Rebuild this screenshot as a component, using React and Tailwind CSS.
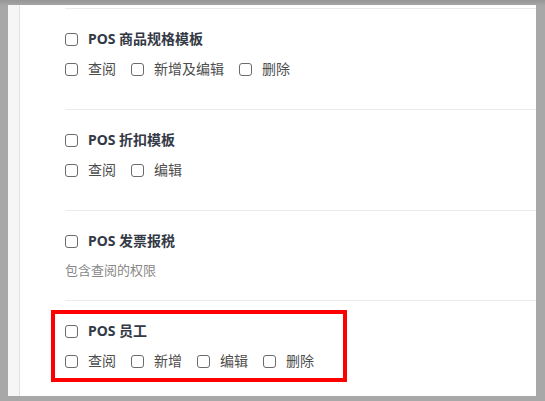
const sections = [
    { title: 'POS 商品规格模板', perms: ['查阅', '新增及编辑', '删除'], h: 'h-[101px]' },
    { title: 'POS 折扣模板', perms: ['查阅', '编辑'], h: 'h-[101px]' },
    { title: 'POS 发票报税', desc: '包含查阅的权限', h: 'h-[90px]' },
    { title: 'POS 员工', perms: ['查阅', '新增', '编辑', '删除'], h: 'h-[96px]' },
]

function Box() {
    return <span className="w-[13px] h-[13px] border border-[#6b6b6b] rounded-[3px] bg-white shrink-0" />
}

export default function App() {
    return (
        <div
            className="relative w-[545px] h-[401px] bg-[#a8a8a8] pt-[5px] pl-[8px] overflow-hidden"
            style={{ fontFamily: '"Noto Sans", "Noto Sans CJK SC", sans-serif' }}
        >
            <div className="absolute top-0 left-0 right-0 h-[6px] bg-gradient-to-b from-[#969696] to-[#a8a8a8]" />
            <div className="relative flex w-[528px] h-[391px] bg-white">
                <div className="w-[12px] bg-[#f6f6f6] border-r border-[#e2e2e2]" />
                <div className="flex-1 pl-[45px] pt-[3px]">
                    {sections.map((s) => (
                        <div key={s.title} className={`${s.h} border-t border-[#ebebeb] pt-[20px]`}>
                            <div className="flex items-center gap-[10px] h-5">
                                <Box />
                                <span className="text-[14px] font-bold text-[#333a46] leading-5">{s.title}</span>
                            </div>
                            {s.perms && (
                                <div className="flex items-center gap-[15px] h-5 mt-[10px]">
                                    {s.perms.map((p) => (
                                        <div key={p} className="flex items-center gap-[10px]">
                                            <Box />
                                            <span className="text-[14px] text-[#4d4d4d] leading-5">{p}</span>
                                        </div>
                                    ))}
                                </div>
                            )}
                            {s.desc && (
                                <div className="h-5 mt-[9px] text-[13px] leading-5 text-[#888]">{s.desc}</div>
                            )}
                        </div>
                    ))}
                </div>
            </div>
            <div className="absolute left-[51px] top-[310px] w-[296px] h-[72px] border-4 border-[#ff0000]" />
        </div>
    )
}
